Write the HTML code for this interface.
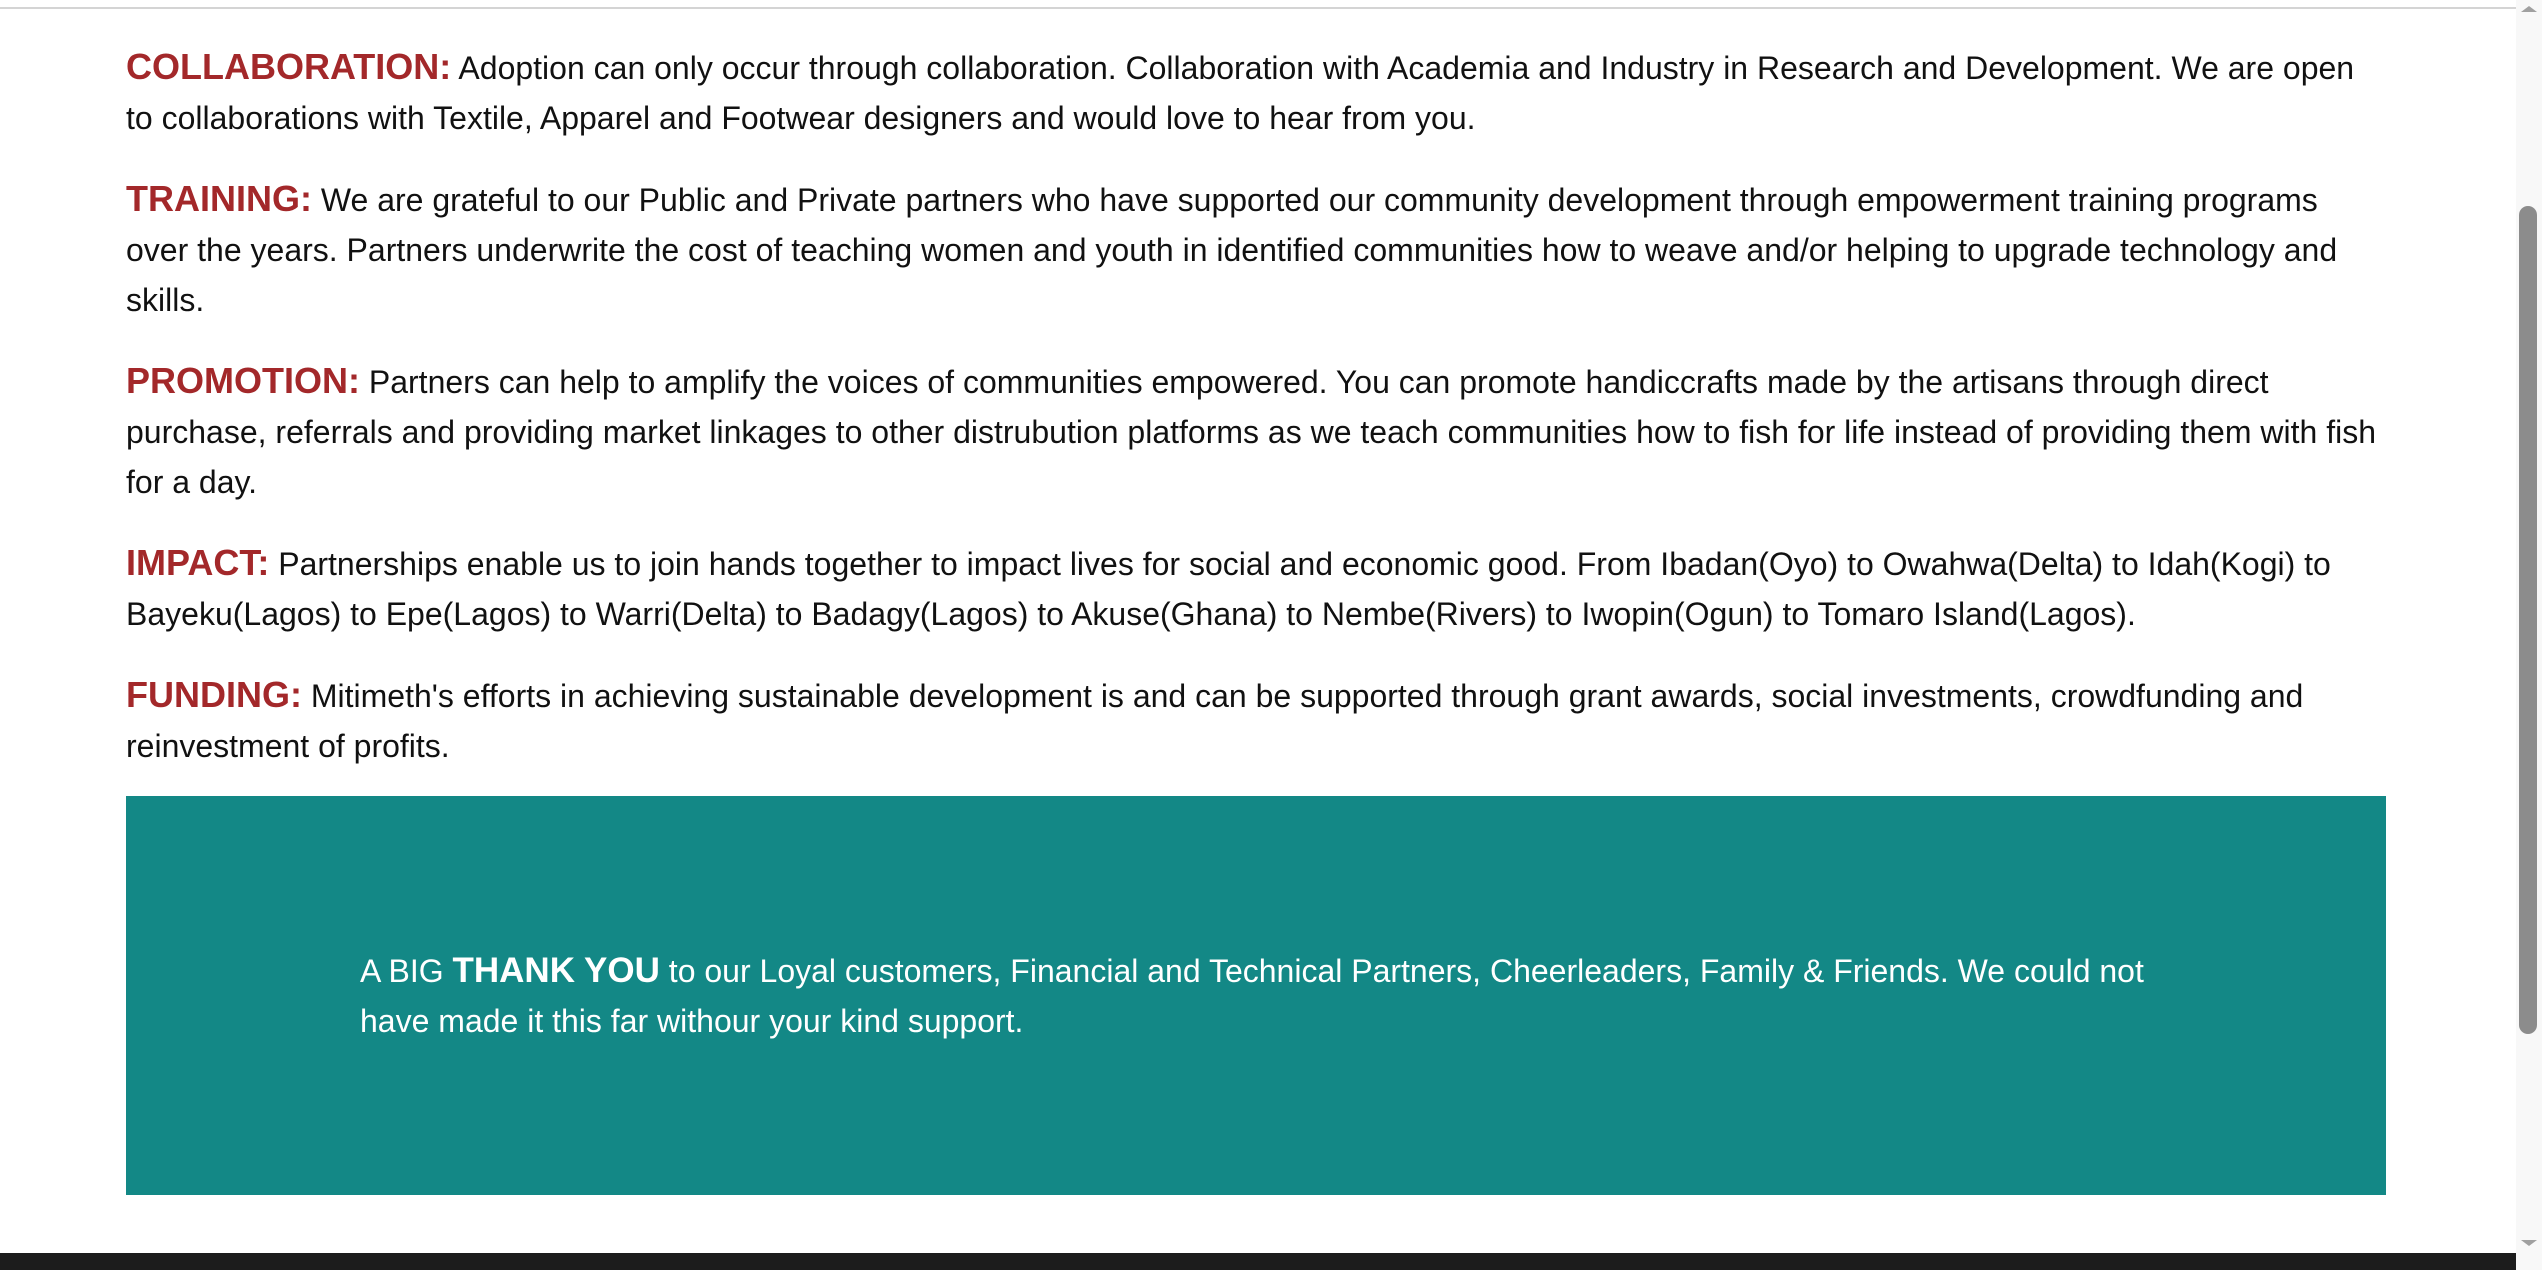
<!DOCTYPE html>
<html><head><meta charset="utf-8"><style>
html,body{margin:0;padding:0;width:2542px;height:1270px;overflow:hidden;background:#fff;font-family:"Liberation Sans",Arial,sans-serif;}
.topline{position:absolute;left:0;top:7px;width:2516px;height:2px;background:#d4d4d4;}
.content{position:absolute;left:126px;top:42px;width:2256px;}
p{margin:0 0 31px 0;font-size:32px;line-height:50px;color:#111;}
b.h{color:#a3282a;font-size:36px;}
.teal{position:absolute;left:126px;top:796px;width:2260px;height:399px;background:#138886;color:#fff;box-sizing:border-box;padding:0 234px;display:flex;align-items:center;}
.teal div{font-size:32px;line-height:50px;}
.teal b{font-size:35px;}
.sb{position:absolute;left:2516px;top:0;width:26px;height:1270px;background:#f8f8f8;}
.thumb{position:absolute;left:2519px;top:206px;width:18px;height:828px;background:#8c8c8c;border-radius:9px;}
.up{position:absolute;left:2521px;top:6px;width:0;height:0;border-left:8px solid transparent;border-right:8px solid transparent;border-bottom:6px solid #a0a0a0;}
.dn{position:absolute;left:2521px;top:1240px;width:0;height:0;border-left:8px solid transparent;border-right:8px solid transparent;border-top:6px solid #a0a0a0;}
.bottom{position:absolute;left:0;top:1253px;width:2516px;height:17px;background:#1c1c1c;}
</style></head><body>
<div class="topline"></div>
<div class="content">
<p><b class="h">COLLABORATION:</b> Adoption can only occur through collaboration. Collaboration with Academia and Industry in Research and Development. We are open to collaborations with Textile, Apparel and Footwear designers and would love to hear from you.</p>
<p><b class="h">TRAINING:</b> We are grateful to our Public and Private partners who have supported our community development through empowerment training programs over the years. Partners underwrite the cost of teaching women and youth in identified communities how to weave and/or helping to upgrade technology and skills.</p>
<p><b class="h">PROMOTION:</b> Partners can help to amplify the voices of communities empowered. You can promote handiccrafts made by the artisans through direct purchase, referrals and providing market linkages to other distrubution platforms as we teach communities how to fish for life instead of providing them with fish for a day.</p>
<p><b class="h">IMPACT:</b> Partnerships enable us to join hands together to impact lives for social and economic good. From Ibadan(Oyo) to Owahwa(Delta) to Idah(Kogi) to Bayeku(Lagos) to Epe(Lagos) to Warri(Delta) to Badagy(Lagos) to Akuse(Ghana) to Nembe(Rivers) to Iwopin(Ogun) to Tomaro Island(Lagos).</p>
<p><b class="h">FUNDING:</b> Mitimeth's efforts in achieving sustainable development is and can be supported through grant awards, social investments, crowdfunding and reinvestment of profits.</p>
</div>
<div class="teal"><div>A BIG <b>THANK YOU</b> to our Loyal customers, Financial and Technical Partners, Cheerleaders, Family &amp; Friends. We could not have made it this far withour your kind support.</div></div>
<div class="sb"></div><div class="thumb"></div><div class="up"></div><div class="dn"></div>
<div class="bottom"></div>
</body></html>
